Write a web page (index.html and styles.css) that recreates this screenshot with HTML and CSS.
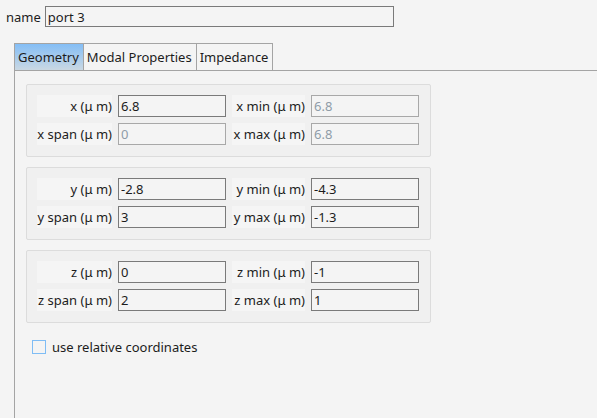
FILE: index.html
```html
<!DOCTYPE html>
<html lang="en">
<head>
  <meta charset="UTF-8">
  <title>Port</title>
  <link rel="stylesheet" href="styles.css">
</head>
<body>

  <div class="name-row">
    <label>name</label>
    <input type="text" class="name-input" value="port 3">
  </div>

  <div class="tabs">
    <div class="tab active">Geometry</div>
    <div class="tab">Modal Properties</div>
    <div class="tab">Impedance</div>
  </div>

  <div class="panel">
    <div class="group">
      <label class="cell">x (μ m)</label>
      <input type="text" class="field" value="6.8">
      <label class="cell">x min (μ m)</label>
      <input type="text" class="field" value="6.8" disabled>
      <label class="cell">x span (μ m)</label>
      <input type="text" class="field" value="0" disabled>
      <label class="cell">x max (μ m)</label>
      <input type="text" class="field" value="6.8" disabled>
    </div>

    <div class="group">
      <label class="cell">y (μ m)</label>
      <input type="text" class="field" value="-2.8">
      <label class="cell">y min (μ m)</label>
      <input type="text" class="field" value="-4.3">
      <label class="cell">y span (μ m)</label>
      <input type="text" class="field" value="3">
      <label class="cell">y max (μ m)</label>
      <input type="text" class="field" value="-1.3">
    </div>

    <div class="group">
      <label class="cell">z (μ m)</label>
      <input type="text" class="field" value="0">
      <label class="cell">z min (μ m)</label>
      <input type="text" class="field" value="-1">
      <label class="cell">z span (μ m)</label>
      <input type="text" class="field" value="2">
      <label class="cell">z max (μ m)</label>
      <input type="text" class="field" value="1">
    </div>

    <label class="check-row">
      <span class="checkbox"></span>
      use relative coordinates
    </label>
  </div>

</body>
</html>
```

FILE: styles.css
```css
body {
  margin: 0;
  height: 418px;
  overflow: hidden;
  background: #f4f4f4;
  font-family: "Noto Sans", sans-serif;
  font-size: 13px;
  color: #1c1c1c;
}

input {
  font-family: "Noto Sans", sans-serif;
  font-size: 13px;
  color: #1c1c1c;
  background: #f4f4f4;
  border: 1px solid #7a7a7a;
  box-sizing: border-box;
  margin: 0;
  padding: 0 2px;
  outline: none;
}

input:disabled {
  color: #8f9ca8;
  border-color: #a8a8a8;
}

.name-row {
  display: flex;
  align-items: center;
  gap: 4px;
  padding: 6px 0 0 6px;
}

.name-input {
  width: 349px;
  height: 21px;
}

.tabs {
  display: flex;
  margin: 16px 0 0 14px;
  height: 27px;
}

.tab {
  height: 27px;
  box-sizing: border-box;
  padding: 0 4px 0 3px;
  line-height: 27px;
  border: 1px solid #a4a4a4;
  border-bottom: none;
  border-left: none;
  background: #f4f4f4;
}

.tab:first-child {
  border-left: 1px solid #a4a4a4;
}

.tab.active {
  background: linear-gradient(#84bef6, #cad8e3);
}

.panel {
  margin-left: 14px;
  height: 348px;
  border-left: 1px solid #a4a4a4;
  border-top: 1px solid #a4a4a4;
  padding: 13px 0 0 11px;
}

.group {
  width: 405px;
  box-sizing: border-box;
  display: grid;
  grid-template-columns: 75px 108px 73px 108px;
  grid-auto-rows: 22px;
  column-gap: 6px;
  row-gap: 6px;
  padding: 10px 0 11px 10px;
  margin-bottom: 10px;
  background: #f0f0f0;
  border: 1px solid #dcdcdc;
  border-radius: 2px;
}

.cell {
  background: #f5f5f5;
  text-align: right;
  line-height: 22px;
  white-space: nowrap;
  direction: rtl;
}

.field {
  height: 22px;
}

.check-row {
  display: flex;
  align-items: center;
  gap: 6px;
  margin: 15px 0 0 6px;
}

.checkbox {
  width: 12px;
  height: 12px;
  border: 1px solid #7fbdf5;
  background: #f4f4f4;
}
```
